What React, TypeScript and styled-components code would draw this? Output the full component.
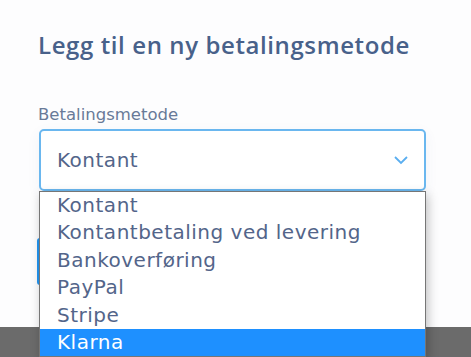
import styled, { createGlobalStyle } from "styled-components";

const GlobalStyle = createGlobalStyle`
  html, body {
    margin: 0;
    padding: 0;
    background: #6b6b6b;
    overflow: hidden;
  }

  body {
    font-family: "DejaVu Sans", "Open Sans", sans-serif;
  }
`;

const Page = styled.div`
  width: 471px;
  height: 357px;
  display: flex;
  flex-direction: column;
`;

const Modal = styled.div`
  height: 327px;
  background: #fdfdfe;
  padding: 29px 45px 0 38px;
  box-sizing: border-box;
`;

const Title = styled.h2`
  margin: 0;
  font-family: "Open Sans", "Liberation Sans", sans-serif;
  font-size: 24px;
  line-height: 32px;
  font-weight: 600;
  color: #48618a;
  letter-spacing: 0.6px;
`;

const Label = styled.label`
  display: block;
  margin-top: 44px;
  font-size: 16.5px;
  line-height: 20px;
  color: #687a98;
`;

const Field = styled.div`
  position: relative;
  margin-top: 4px;
  margin-left: 1px;
`;

const SelectBox = styled.div`
  height: 62px;
  box-sizing: border-box;
  border: 2px solid #6ab7ef;
  border-radius: 5px;
  background: #ffffff;
  box-shadow: 0 4px 14px rgba(60, 80, 140, 0.06);
  display: flex;
  align-items: center;
  justify-content: space-between;
  padding: 0 15px 0 16px;
  font-size: 20px;
  letter-spacing: 0.5px;
  color: #53658a;
`;

const Chevron = styled.svg`
  width: 16px;
  height: 10px;
`;

// the submit button sits under the open list; only its left edge shows
const SubmitButton = styled.button`
  display: block;
  margin: 47px 0 0 -2px;
  width: 140px;
  height: 47px;
  border: none;
  border-radius: 3px;
  background: #2196f3;
`;

const ListBox = styled.ul`
  position: absolute;
  top: 62px;
  left: 0;
  width: 387px;
  box-sizing: border-box;
  margin: 0;
  padding: 0;
  list-style: none;
  background: #ffffff;
  border: 1px solid #767676;
  box-shadow: 2px 4px 10px rgba(0, 0, 0, 0.25);
`;

const Option = styled.li<{ $active?: boolean }>`
  height: 27.4px;
  line-height: 27.4px;
  padding-left: 17px;
  font-size: 20px;
  letter-spacing: 0.5px;
  color: ${(p) => (p.$active ? "#ffffff" : "#53658a")};
  background: ${(p) => (p.$active ? "#1e90ff" : "transparent")};
  white-space: nowrap;
`;

const Overlay = styled.div`
  flex: 1;
  background: #6b6b6b;
`;

const options = [
  "Kontant",
  "Kontantbetaling ved levering",
  "Bankoverføring",
  "PayPal",
  "Stripe",
  "Klarna",
];

export default function App() {
  return (
    <Page>
      <GlobalStyle />
      <Modal>
        <Title>Legg til en ny betalingsmetode</Title>
        <Label>Betalingsmetode</Label>
        <Field>
          <SelectBox>
            <span>Kontant</span>
            <Chevron viewBox="0 0 16 10">
              <path
                d="M2 2 L8 8 L14 2"
                fill="none"
                stroke="#5aaef0"
                strokeWidth="1.8"
              />
            </Chevron>
          </SelectBox>
          <SubmitButton aria-label="Legg til" />
          <ListBox>
            {options.map((o) => (
              <Option key={o} $active={o === "Klarna"}>
                {o}
              </Option>
            ))}
          </ListBox>
        </Field>
      </Modal>
      <Overlay />
    </Page>
  );
}
